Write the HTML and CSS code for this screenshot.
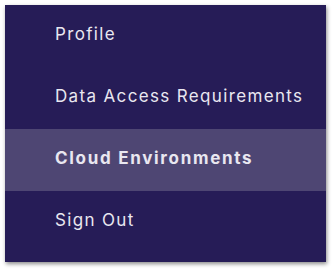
FILE: index.html
```html
<!DOCTYPE html>
<html>
<head>
<meta charset="utf-8">
<link rel="stylesheet" href="styles.css">
</head>
<body>
<nav class="menu">
  <a class="item" href="#">Profile</a>
  <a class="item" href="#">Data Access Requirements</a>
  <a class="item active" href="#">Cloud Environments</a>
  <a class="item" href="#">Sign Out</a>
</nav>
</body>
</html>
```
FILE: styles.css
```css
html, body {
  margin: 0;
  padding: 0;
  background: #ffffff;
}
body {
  padding: 5px 7px 9px 5px;
  font-family: Inter, "Noto Sans", sans-serif;
}
.menu {
  width: 321px;
  height: 257px;
  background: #261c57;
  display: flex;
  flex-direction: column;
  box-shadow: 1px 2px 4px rgba(0, 0, 0, 0.45);
}
.item {
  display: flex;
  align-items: center;
  height: 62px;
  padding-left: 50px;
  padding-bottom: 4px;
  box-sizing: border-box;
  color: #e9e7f0;
  text-decoration: none;
  font-size: 17px;
  letter-spacing: 1.35px;
}
.item.active {
  background: #4e4673;
  font-weight: 700;
  letter-spacing: 1.7px;
}
```
